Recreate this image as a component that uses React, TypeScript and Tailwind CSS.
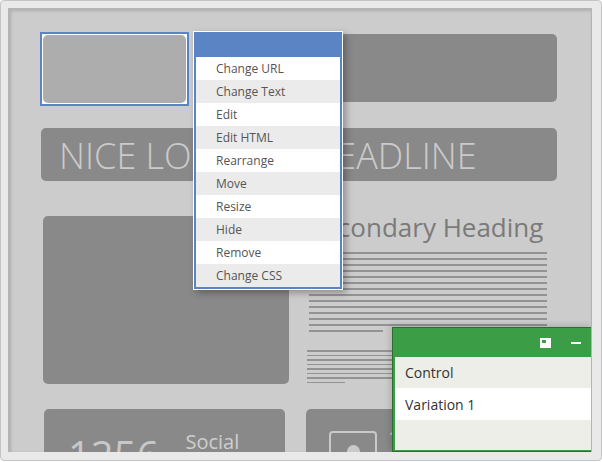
const menuItems = [
  "Change URL",
  "Change Text",
  "Edit",
  "Edit HTML",
  "Rearrange",
  "Move",
  "Resize",
  "Hide",
  "Remove",
  "Change CSS",
];

const App = () => {
  const para1 = Array.from({ length: 13 });
  const para2 = Array.from({ length: 7 });

  return (
    <div className="w-[602px] h-[462px] bg-white font-['Open_Sans',sans-serif]">
      <div className="w-[602px] h-[461px] rounded-[4px] border border-[#c4c4c4] bg-[#e9e9e9] p-[7px]">
        <div className="relative w-[584px] h-[444px] overflow-hidden bg-[#cccccc] border-t-2 border-l-2 border-r border-[#b4b4b4] shadow-[inset_1px_1px_3px_rgba(0,0,0,0.15)]">
          <div className="pl-[32px] pt-[24px]">
            {/* top row */}
            <div className="flex h-[68px] items-start gap-[8px]">
              <div className="-ml-[2px] -mt-[2px] border-2 border-[#5b84c4] bg-white p-[1px]">
                <div className="w-[143px] h-[68px] rounded-[5px] bg-[#adadad]" />
              </div>
              <div className="w-[360px] h-[68px] rounded-[5px] bg-[#898989]" />
            </div>

            {/* headline */}
            <div className="-ml-[1px] mt-[26px] w-[516px] h-[53px] rounded-[5px] bg-[#898989] pl-[18px] flex items-center">
              <span className="mt-[2px] text-[36px] font-light text-[#cbcbcb] leading-none">NICE LOOKING HEADLINE</span>
            </div>

            {/* content row */}
            <div className="mt-[35px] flex">
              <div className="ml-[1px] w-[246px] h-[168px] rounded-[5px] bg-[#898989]" />
              <div className="ml-[18px] w-[240px]">
                <div className="-mt-[7px] pl-[2px] text-[26px] leading-[36px] text-[#7a7a7a]">Secondary Heading</div>
                <div className="mt-[7px] flex flex-col gap-[4px] pl-[2px]">
                  {para1.map((_, i) => (
                    <div key={i} className="h-[2px] w-[238px] bg-[#939393]" />
                  ))}
                  <div className="h-[2px] w-[74px] bg-[#939393]" />
                </div>
                <div className="mt-[18px] flex flex-col gap-[3px]">
                  {para2.map((_, i) => (
                    <div key={i} className="h-[1.5px] w-[240px] bg-[#939393]" />
                  ))}
                  <div className="h-[1.5px] w-[38px] bg-[#939393]" />
                </div>
              </div>
            </div>

            {/* bottom row */}
            <div className="mt-[25px] flex gap-[21px]">
              <div className="ml-[2px] w-[241px] h-[80px] rounded-[5px] bg-[#898989] flex items-start">
                <span className="ml-[24px] mt-[26px] text-[40px] leading-none text-[#c8c8c8]">1256</span>
                <span className="ml-[26px] mt-[20px] text-[20px] leading-tight text-[#cfcfcf]">Social</span>
              </div>
              <div className="w-[250px] h-[80px] rounded-[5px] bg-[#898989] flex items-start">
                <div className="ml-[23px] mt-[22px] w-[48px] h-[48px] rounded-[4px] border-2 border-[#c9c9c9] flex justify-center">
                  <div className="mt-[12px] w-[13px] h-[13px] rounded-full bg-[#c9c9c9]" />
                </div>
                <span className="ml-[11px] mt-[16px] text-[20px] leading-tight text-[#cfcfcf]">1</span>
              </div>
            </div>
          </div>

          {/* variations panel */}
          <div className="absolute right-[-1px] bottom-0 w-[200px] h-[125px] border border-[#2d6d31] bg-[#3b9d45] shadow-[-2px_-2px_6px_rgba(0,0,0,0.15)] flex flex-col">
            <div className="h-[29px] flex items-center justify-end gap-[20px] pr-[10px]">
              <svg width="11" height="10" viewBox="0 0 11 10">
                <rect x="0" y="0" width="11" height="10" fill="#ffffff" />
                <rect x="2" y="2" width="4" height="3" fill="#3b9d45" />
              </svg>
              <div className="w-[10px] h-[2px] bg-white" />
            </div>
            <div className="ml-[2px] flex-1 flex flex-col text-[14px] text-[#333333] mb-[1px]">
              <div className="h-[31px] bg-[#eeeee9] pl-[10px] flex items-center">Control</div>
              <div className="h-[32px] bg-white pl-[10px] flex items-center">Variation 1</div>
              <div className="flex-1 bg-[#eeeee9]" />
            </div>
          </div>
        </div>
      </div>

      {/* context menu */}
      <div className="absolute left-[193px] top-[31px] w-[150px] border border-white bg-[#5b84c4] px-[2px] pb-[2px] shadow-[3px_3px_7px_rgba(0,0,0,0.3)]">
        <div className="h-[25px]" />
        {menuItems.map((item, i) => (
          <div
            key={item}
            className={
              "h-[23px] pl-[20px] flex items-center text-[12px] text-[#555555] " +
              (i % 2 === 0 ? "bg-white" : "bg-[#ebebeb]")
            }
          >
            {item}
          </div>
        ))}
      </div>
    </div>
  );
};

export default App;
